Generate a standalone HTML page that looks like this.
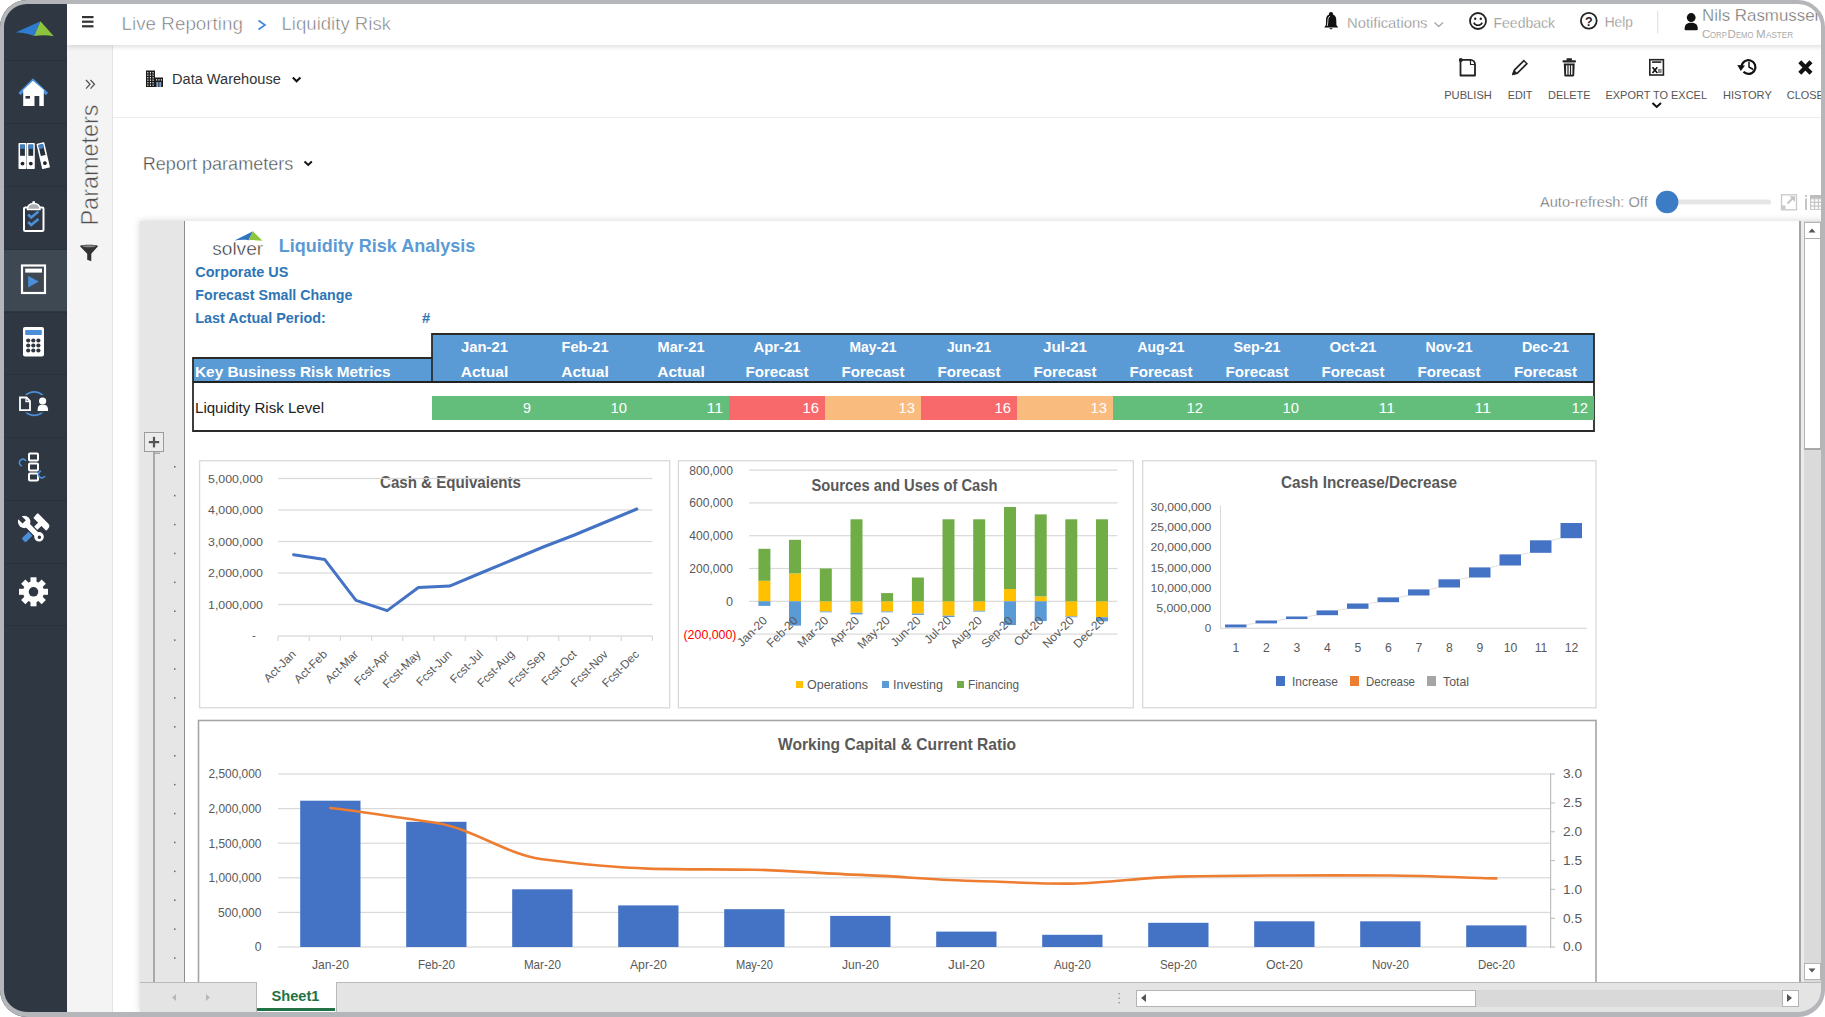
<!DOCTYPE html>
<html><head><meta charset="utf-8"><title>Liquidity Risk</title>
<style>
html,body{margin:0;padding:0;width:1825px;height:1017px;overflow:hidden;background:#fff;}
body{font-family:"Liberation Sans",sans-serif;position:relative;}
.abs{position:absolute;}
svg{position:absolute;left:0;top:0;overflow:visible;}
svg text{font-family:"Liberation Sans",sans-serif;}
</style></head><body>

<div class="abs" style="left:113px;top:45px;width:1712px;height:972px;background:#fff"></div>
<div class="abs" style="left:113px;top:117px;width:1712px;height:1px;background:#ececec"></div>
<div class="abs" style="left:67px;top:45px;width:45px;height:972px;background:#f4f4f4;border-right:1px solid #e4e4e4"></div>
<div class="abs" style="left:67px;top:0;width:1758px;height:45px;background:#fff;box-shadow:0 2px 5px rgba(0,0,0,0.13);z-index:2"></div>
<div class="abs" style="left:140px;top:221px;width:1685px;height:791px;background:#fff;box-shadow:0 0 7px rgba(0,0,0,0.18)"></div>
<div class="abs" style="left:0;top:0;width:67px;height:1017px;background:#2f3742;z-index:3"></div>
<div class="abs" style="left:0;top:249px;width:67px;height:62px;background:#3e4853;z-index:3"></div>
<div class="abs" style="left:0;top:60px;width:67px;height:1px;background:#29313b;z-index:3"></div>
<div class="abs" style="left:0;top:123px;width:67px;height:1px;background:#29313b;z-index:3"></div>
<div class="abs" style="left:0;top:186px;width:67px;height:1px;background:#29313b;z-index:3"></div>
<div class="abs" style="left:0;top:249px;width:67px;height:1px;background:#29313b;z-index:3"></div>
<div class="abs" style="left:0;top:312px;width:67px;height:1px;background:#29313b;z-index:3"></div>
<div class="abs" style="left:0;top:374px;width:67px;height:1px;background:#29313b;z-index:3"></div>
<div class="abs" style="left:0;top:437px;width:67px;height:1px;background:#29313b;z-index:3"></div>
<div class="abs" style="left:0;top:500px;width:67px;height:1px;background:#29313b;z-index:3"></div>
<div class="abs" style="left:0;top:563px;width:67px;height:1px;background:#29313b;z-index:3"></div>
<div class="abs" style="left:0;top:625px;width:67px;height:1px;background:#29313b;z-index:3"></div>
<div class="abs" style="left:140px;top:221px;width:44px;height:761px;background:#e6e6e6"></div>
<div class="abs" style="left:183.5px;top:221px;width:1.5px;height:761px;background:#8e8e8e"></div>
<div class="abs" style="left:153px;top:452px;width:2px;height:530px;background:#a8a8a8"></div>
<div class="abs" style="left:144px;top:432px;width:18px;height:18px;border:1px solid #9c9c9c;background:#ececec"></div>
<div class="abs" style="left:1799px;top:221px;width:2px;height:761px;background:#a4a4a4"></div>
<div class="abs" style="left:1801px;top:221px;width:24px;height:761px;background:#dadada"></div>
<div class="abs" style="left:1801px;top:221px;width:3px;height:761px;background:#ebebeb"></div>
<div class="abs" style="left:1804px;top:222px;width:15px;height:15px;background:#fff;border:1px solid #b4b4b4;border-bottom:2px solid #b0b0b0"></div>
<div class="abs" style="left:1804px;top:239px;width:15px;height:209px;background:#fff;border:1px solid #b4b4b4;border-top:none;border-bottom:2px solid #a8a8a8"></div>
<div class="abs" style="left:1804px;top:963px;width:15px;height:15px;background:#fff;border:1px solid #b4b4b4"></div>
<div class="abs" style="left:140px;top:982px;width:1685px;height:35px;background:#e4e4e4;border-top:1px solid #b9b9b9"></div>
<div class="abs" style="left:256px;top:982px;width:79px;height:30px;background:#fff;border-left:1px solid #b9b9b9;border-right:1px solid #b9b9b9"></div>
<div class="abs" style="left:257px;top:1008px;width:78px;height:3px;background:#217346"></div>
<div class="abs" style="left:1136px;top:990px;width:663px;height:17px;background:#d9d9d9"></div>
<div class="abs" style="left:1136px;top:990px;width:15px;height:15px;background:#fff;border:1px solid #b4b4b4"></div>
<div class="abs" style="left:1152px;top:990px;width:323px;height:15px;background:#fff;border:1px solid #b4b4b4;border-left:none"></div>
<div class="abs" style="left:1782px;top:990px;width:15px;height:15px;background:#fff;border:1px solid #b4b4b4"></div>
<svg width="1825" height="1017" viewBox="0 0 1825 1017" style="z-index:10"><path d="M15.5,32.5 L40.5,21.2 L34.2,36 C28,33.5 22,32.3 15.5,32.5 Z" fill="#2f7bd0"/>
<path d="M40.5,21.2 L53.8,36.3 C47,35 40.5,35.2 34.2,36 Z" fill="#8cc43f"/>
<path d="M19.5,94 L33,80.5 L47,94" fill="none" stroke="#4a8fd8" stroke-width="3.2" stroke-linejoin="miter"/>
<path d="M23.2,90 L33,80.8 L43.8,90 L43.8,106 L23.2,106 Z" fill="#fff"/>
<rect x="25.5" y="96" width="4.5" height="2.6" fill="#2f3742"/><rect x="34.5" y="96" width="4.8" height="10" fill="#2f3742"/>
<rect x="18.5" y="143" width="8" height="26" rx="0.8" fill="#fff"/><rect x="20.1" y="144.6" width="4.8" height="11.2" fill="#26303a"/><rect x="20.1" y="144.6" width="4.8" height="4.2" fill="#3f7fc8"/><circle cx="22.5" cy="163.6" r="1.9" fill="#1e252d"/><rect x="26.8" y="143" width="8" height="26" rx="0.8" fill="#fff"/><rect x="28.400000000000002" y="144.6" width="4.8" height="11.2" fill="#26303a"/><rect x="28.400000000000002" y="144.6" width="4.8" height="4.2" fill="#3f7fc8"/><circle cx="30.8" cy="163.6" r="1.9" fill="#1e252d"/><g transform="rotate(-13 40.3 143)"><rect x="36.3" y="143" width="8" height="26" rx="0.8" fill="#fff"/><rect x="37.9" y="144.6" width="4.8" height="11.2" fill="#26303a"/><rect x="37.9" y="144.6" width="4.8" height="4.2" fill="#3f7fc8"/><circle cx="40.3" cy="163.6" r="1.9" fill="#1e252d"/></g>
<rect x="24" y="207.5" width="19.5" height="23.5" rx="1.2" fill="none" stroke="#fff" stroke-width="2"/><path d="M27.5,209.5 C27.5,205.5 29,203.5 33.7,203.5 C38.5,203.5 40,205.5 40,209.5 Z" fill="#a9aeb3" stroke="#fff" stroke-width="1.4"/><circle cx="33.7" cy="202.2" r="1.3" fill="#fff"/><path d="M28.2,214.5 L31.2,217.5 L38.5,211.5 M28.2,222 L31.2,225 L38.5,219" fill="none" stroke="#4a8fd8" stroke-width="2.6"/>
<rect x="22" y="265.5" width="23" height="27.5" fill="none" stroke="#fff" stroke-width="2.2"/><rect x="25.2" y="268.6" width="16.8" height="4" fill="#fff"/><path d="M28.2,276 L38.8,281.6 L28.2,287.5 Z" fill="#4a8fd8"/>
<rect x="23" y="327" width="21" height="29.5" rx="2" fill="#fff"/><rect x="25.2" y="330" width="16.6" height="5" rx="0.8" fill="#4a8fd8"/>
<circle cx="28.2" cy="340.5" r="2.1" fill="#2f3742"/>
<circle cx="33.3" cy="340.5" r="2.1" fill="#2f3742"/>
<circle cx="38.4" cy="340.5" r="2.1" fill="#2f3742"/>
<circle cx="28.2" cy="345.5" r="2.1" fill="#2f3742"/>
<circle cx="33.3" cy="345.5" r="2.1" fill="#2f3742"/>
<circle cx="38.4" cy="345.5" r="2.1" fill="#2f3742"/>
<circle cx="28.2" cy="350.5" r="2.1" fill="#2f3742"/>
<circle cx="33.3" cy="350.5" r="2.1" fill="#2f3742"/>
<circle cx="38.4" cy="350.5" r="2.1" fill="#2f3742"/>
<circle cx="34.2" cy="403.6" r="11.8" fill="none" stroke="#4a8fd8" stroke-width="1.8"/>
<rect x="17.5" y="395" width="15" height="17.5" fill="#2f3742"/><rect x="35.5" y="395" width="14.5" height="17.5" fill="#2f3742"/>
<path d="M20,397.5 L26.5,397.5 L30,401 L30,410.2 L20,410.2 Z" fill="none" stroke="#fff" stroke-width="1.8"/><path d="M26,397.5 L26,401.5 L30,401.5" fill="none" stroke="#fff" stroke-width="1.3"/><circle cx="42.6" cy="401" r="3.6" fill="#fff"/><path d="M37.6,411 C37.6,405.5 39.5,404.8 42.8,404.8 C46.1,404.8 48.1,405.5 48.1,411 Z" fill="#fff"/>
<rect x="29" y="453.5" width="9" height="7" rx="1" fill="none" stroke="#fff" stroke-width="2"/>
<rect x="29" y="463.5" width="9" height="7" rx="1" fill="none" stroke="#fff" stroke-width="2"/>
<rect x="29" y="473.5" width="9" height="7" rx="1" fill="none" stroke="#fff" stroke-width="2"/>
<path d="M26,461 A3.5,3.5 0 1 0 22,466" fill="none" stroke="#4a8fd8" stroke-width="1.6"/><path d="M41,471 A3.5,3.5 0 1 0 45,476" fill="none" stroke="#4a8fd8" stroke-width="1.6"/>
<g transform="translate(33.8 530.3) rotate(45)"><rect x="-2.3" y="-9" width="4.6" height="14" fill="#fff"/><rect x="-2.8" y="4" width="5.6" height="10.5" rx="1.5" fill="#4a8fd8"/><path d="M-9,-15 L6,-15 C8,-15 9,-13 9,-11 L9,-8.5 L-9,-8.5 C-9,-11 -10,-13 -9,-15 Z" fill="#fff"/></g>
<g transform="translate(31.6 529.4) rotate(-45)"><rect x="-3.2" y="-9" width="6.4" height="18" fill="#fff" stroke="#2f3742" stroke-width="1.2"/><circle cx="0" cy="-10.5" r="6.2" fill="#fff"/><rect x="-2.3" y="-18" width="4.6" height="7.5" fill="#2f3742"/><circle cx="0" cy="10.5" r="4.8" fill="#fff"/><circle cx="0" cy="11" r="1.7" fill="#2f3742"/></g>
<rect x="30.5" y="577.3" width="6" height="6" fill="#fff" transform="rotate(0 33.5 591.8)"/><rect x="30.5" y="577.3" width="6" height="6" fill="#fff" transform="rotate(45 33.5 591.8)"/><rect x="30.5" y="577.3" width="6" height="6" fill="#fff" transform="rotate(90 33.5 591.8)"/><rect x="30.5" y="577.3" width="6" height="6" fill="#fff" transform="rotate(135 33.5 591.8)"/><rect x="30.5" y="577.3" width="6" height="6" fill="#fff" transform="rotate(180 33.5 591.8)"/><rect x="30.5" y="577.3" width="6" height="6" fill="#fff" transform="rotate(225 33.5 591.8)"/><rect x="30.5" y="577.3" width="6" height="6" fill="#fff" transform="rotate(270 33.5 591.8)"/><rect x="30.5" y="577.3" width="6" height="6" fill="#fff" transform="rotate(315 33.5 591.8)"/><circle cx="33.5" cy="591.8" r="10.5" fill="#fff"/><circle cx="33.5" cy="591.8" r="4.8" fill="#2f3742"/>
<rect x="82" y="16" width="11.5" height="2.2" fill="#333"/><rect x="82" y="20.6" width="11.5" height="2.2" fill="#333"/><rect x="82" y="25.2" width="11.5" height="2.2" fill="#333"/>
<text x="121.5" y="29.7" font-size="18.70" fill="#6f6f6f" font-weight="normal" text-anchor="start" textLength="121.5" lengthAdjust="spacingAndGlyphs" stroke="#fff" stroke-width="0.55">Live Reporting</text>
<path d="M258.5,20.5 L265,25 L258.5,29.5" fill="none" stroke="#3d86d6" stroke-width="1.6"/>
<text x="281.5" y="29.7" font-size="18.70" fill="#6f6f6f" font-weight="normal" text-anchor="start" textLength="109.5" lengthAdjust="spacingAndGlyphs" stroke="#fff" stroke-width="0.55">Liquidity Risk</text>
<path d="M1331,12 C1332.6,12 1333.2,13 1333,14.5 C1335.8,15.5 1336.3,18 1336.3,21 L1336.4,25 L1338.2,27.5 L1324.2,27.5 L1325.9,25 L1326,21 C1326,18 1326.4,15.5 1329,14.5 C1328.8,13 1329.4,12 1331,12 Z" fill="#111"/><path d="M1329.5,28 L1332.5,28 C1332.5,29.8 1329.5,29.8 1329.5,28 Z" fill="#333"/><path d="M1330,16 C1328.2,17 1327.8,19.5 1327.8,22 L1327.3,26" fill="none" stroke="#ddd" stroke-width="0.9"/>
<text x="1347.0" y="27.8" font-size="14.50" fill="#808080" font-weight="normal" text-anchor="start" textLength="80.5" lengthAdjust="spacingAndGlyphs" stroke="#fff" stroke-width="0.35">Notifications</text>
<path d="M1434.5,22.5 L1438.7,26.5 L1443,22.5" fill="none" stroke="#aaa" stroke-width="1.5"/>
<circle cx="1478" cy="21" r="8" fill="none" stroke="#222" stroke-width="1.8"/><circle cx="1475.2" cy="18.8" r="1.2" fill="#222"/><circle cx="1480.8" cy="18.8" r="1.2" fill="#222"/><path d="M1473.8,22.6 C1475.5,26.2 1480.5,26.2 1482.2,22.6" fill="none" stroke="#222" stroke-width="1.6"/>
<text x="1493.5" y="27.8" font-size="14.50" fill="#808080" font-weight="normal" text-anchor="start" textLength="61.5" lengthAdjust="spacingAndGlyphs" stroke="#fff" stroke-width="0.35">Feedback</text>
<circle cx="1588.8" cy="20.8" r="7.9" fill="none" stroke="#222" stroke-width="1.8"/>
<text x="1588.8" y="25.6" font-size="12.50" fill="#222" font-weight="bold" text-anchor="middle" >?</text>
<text x="1604.7" y="27.2" font-size="14.50" fill="#808080" font-weight="normal" text-anchor="start" textLength="28.2" lengthAdjust="spacingAndGlyphs" stroke="#fff" stroke-width="0.35">Help</text>
<rect x="1657.2" y="11" width="1" height="22.5" fill="#dcdcdc"/>
<ellipse cx="1691.2" cy="17.6" rx="4.4" ry="4.5" fill="#111"/><path d="M1684.6,29.2 C1684.6,24 1687.5,22.8 1691.2,22.8 C1694.9,22.8 1697.8,24 1697.8,29.2 C1697.8,30 1697,30.2 1696,30.2 L1686.4,30.2 C1685.4,30.2 1684.6,30 1684.6,29.2 Z" fill="#111"/>
<text x="1702.0" y="20.9" font-size="15.60" fill="#606060" font-weight="normal" text-anchor="start" textLength="122.0" lengthAdjust="spacingAndGlyphs" stroke="#fff" stroke-width="0.4">Nils Rasmussen</text>
<text x="1702.0" y="37.6" font-size="11.50" fill="#aaaaaa" font-weight="normal" text-anchor="start" >C</text>
<text x="1710" y="37.6" font-size="8.6" fill="#aaaaaa" textLength="17" lengthAdjust="spacingAndGlyphs">ORP</text>
<text x="1727.5" y="37.6" font-size="11.50" fill="#aaaaaa" font-weight="normal" text-anchor="start" >D</text>
<text x="1736" y="37.6" font-size="8.6" fill="#aaaaaa" textLength="17.5" lengthAdjust="spacingAndGlyphs">EMO</text>
<text x="1756.0" y="37.6" font-size="11.50" fill="#aaaaaa" font-weight="normal" text-anchor="start" >M</text>
<text x="1766" y="37.6" font-size="8.6" fill="#aaaaaa" textLength="27" lengthAdjust="spacingAndGlyphs">ASTER</text>
<path d="M86,80 L90,84.3 L86,88.6 M90.5,80 L94.5,84.3 L90.5,88.6" fill="none" stroke="#555" stroke-width="1.3"/>
<text x="0" y="0" font-size="23.6" fill="#505050" stroke="#f4f4f4" stroke-width="0.5" transform="translate(98,225.5) rotate(-90)" textLength="121" lengthAdjust="spacingAndGlyphs">Parameters</text>
<path d="M80,246.2 C80,244.2 98,244.2 98,246.2 L91.3,253.8 L91.3,261.2 L87.2,259.8 L87.2,253.8 Z" fill="#333"/><ellipse cx="89" cy="246.3" rx="6.5" ry="1" fill="#888"/>
<rect x="146" y="70.5" width="9" height="16.5" fill="#1a1a1a"/><rect x="154.5" y="77.5" width="8.5" height="9.5" fill="#1a1a1a"/>
<rect x="147.3" y="72.0" width="1.1" height="1.4" fill="#eee"/>
<rect x="149.9" y="72.0" width="1.1" height="1.4" fill="#eee"/>
<rect x="152.5" y="72.0" width="1.1" height="1.4" fill="#eee"/>
<rect x="147.3" y="74.5" width="1.1" height="1.4" fill="#eee"/>
<rect x="149.9" y="74.5" width="1.1" height="1.4" fill="#eee"/>
<rect x="152.5" y="74.5" width="1.1" height="1.4" fill="#eee"/>
<rect x="147.3" y="77.0" width="1.1" height="1.4" fill="#eee"/>
<rect x="149.9" y="77.0" width="1.1" height="1.4" fill="#eee"/>
<rect x="152.5" y="77.0" width="1.1" height="1.4" fill="#eee"/>
<rect x="147.3" y="79.5" width="1.1" height="1.4" fill="#eee"/>
<rect x="149.9" y="79.5" width="1.1" height="1.4" fill="#eee"/>
<rect x="152.5" y="79.5" width="1.1" height="1.4" fill="#eee"/>
<rect x="147.3" y="82.0" width="1.1" height="1.4" fill="#eee"/>
<rect x="149.9" y="82.0" width="1.1" height="1.4" fill="#eee"/>
<rect x="152.5" y="82.0" width="1.1" height="1.4" fill="#eee"/>
<rect x="147.3" y="84.5" width="1.1" height="1.4" fill="#eee"/>
<rect x="149.9" y="84.5" width="1.1" height="1.4" fill="#eee"/>
<rect x="152.5" y="84.5" width="1.1" height="1.4" fill="#eee"/>
<rect x="156" y="79.2" width="1.2" height="1.3" fill="#eee"/><rect x="158.4" y="79.2" width="1.2" height="1.3" fill="#eee"/><rect x="160.8" y="79.2" width="1.2" height="1.3" fill="#eee"/>
<rect x="156.3" y="82" width="5" height="5" fill="#7f9cc4"/><rect x="158.5" y="82" width="0.8" height="5" fill="#1a1a1a"/>
<text x="172.0" y="83.8" font-size="14.70" fill="#333" font-weight="normal" text-anchor="start" textLength="108.8" lengthAdjust="spacingAndGlyphs" >Data Warehouse</text>
<path d="M292.8,77.5 L296.6,81.3 L300.4,77.5" fill="none" stroke="#111" stroke-width="2"/>
<path d="M1460.5,59.8 L1470.5,59.8 C1473,59.8 1475,62 1475,64.5 L1475,75.5 L1460.5,75.5 Z" fill="none" stroke="#222" stroke-width="1.8" stroke-linejoin="round"/><path d="M1470.5,59.8 L1470.5,64.5 L1475,64.5" fill="none" stroke="#222" stroke-width="1.2"/><circle cx="1460.8" cy="60" r="2" fill="#222"/>
<path d="M1512,75.2 L1513.5,69.8 L1523.8,59.5 L1528,63.7 L1517.7,74 Z" fill="#222"/><path d="M1515,70.8 L1524,61.8 L1525.8,63.6 L1516.8,72.6 Z" fill="#fff"/><path d="M1512,75.2 L1513,71.7 L1515.5,74.2 Z" fill="#222"/>
<rect x="1562.5" y="60.2" width="13.5" height="2.4" rx="1" fill="#222"/><rect x="1566.5" y="58.3" width="5.5" height="2.5" rx="0.8" fill="#222"/><path d="M1563.8,63.6 L1574.7,63.6 L1574.2,75.2 C1574.2,76 1573.6,76.4 1573,76.4 L1565.5,76.4 C1564.9,76.4 1564.3,76 1564.3,75.2 Z" fill="#222"/><rect x="1566.1" y="65.3" width="1.3" height="9.4" fill="#fff"/><rect x="1568.6" y="65.3" width="1.3" height="9.4" fill="#fff"/><rect x="1571.1" y="65.3" width="1.3" height="9.4" fill="#fff"/>
<rect x="1649.8" y="59.7" width="13.6" height="15.3" fill="none" stroke="#222" stroke-width="1.6"/><rect x="1652" y="61.3" width="9.3" height="1.6" fill="#222"/>
<path d="M1652.5,67.3 L1657.3,73 M1657.3,67.3 L1652.5,73" stroke="#111" stroke-width="1.7"/><rect x="1658" y="69" width="3.6" height="4" fill="#888"/>
<path d="M1741.6,66.8 A6.9,6.9 0 1 1 1743.5,71.8" fill="none" stroke="#111" stroke-width="2.2"/><path d="M1737.3,65 L1745,65.5 L1740.8,71 Z" fill="#111"/><path d="M1749,61.8 L1749,67 L1753.2,69.5" fill="none" stroke="#111" stroke-width="1.5"/>
<path d="M1799.8,61.8 L1811,73.2 M1811,61.8 L1799.8,73.2" stroke="#111" stroke-width="4.2"/>
<path d="M1652.5,103 L1656.7,107 L1661,103" fill="none" stroke="#111" stroke-width="2"/>
<text x="1444.2" y="99.1" font-size="11.60" fill="#555" font-weight="normal" text-anchor="start" textLength="47.7" lengthAdjust="spacingAndGlyphs" >PUBLISH</text>
<text x="1507.7" y="99.1" font-size="11.60" fill="#555" font-weight="normal" text-anchor="start" textLength="24.8" lengthAdjust="spacingAndGlyphs" >EDIT</text>
<text x="1548.0" y="99.1" font-size="11.60" fill="#555" font-weight="normal" text-anchor="start" textLength="42.6" lengthAdjust="spacingAndGlyphs" >DELETE</text>
<text x="1605.5" y="99.1" font-size="11.60" fill="#555" font-weight="normal" text-anchor="start" textLength="101.5" lengthAdjust="spacingAndGlyphs" >EXPORT TO EXCEL</text>
<text x="1722.9" y="99.1" font-size="11.60" fill="#555" font-weight="normal" text-anchor="start" textLength="48.9" lengthAdjust="spacingAndGlyphs" >HISTORY</text>
<text x="1786.8" y="99.1" font-size="11.60" fill="#555" font-weight="normal" text-anchor="start" textLength="37.0" lengthAdjust="spacingAndGlyphs" >CLOSE</text>
<text x="142.8" y="169.5" font-size="18.60" fill="#4a4a4a" font-weight="normal" text-anchor="start" textLength="150.5" lengthAdjust="spacingAndGlyphs" stroke="#fff" stroke-width="0.4">Report parameters</text>
<path d="M304.5,161.5 L308.2,165 L311.8,161.5" fill="none" stroke="#111" stroke-width="1.9"/>
<text x="1540.0" y="206.8" font-size="14.60" fill="#606060" font-weight="normal" text-anchor="start" textLength="107.7" lengthAdjust="spacingAndGlyphs" stroke="#fff" stroke-width="0.35">Auto-refresh: Off</text>
<rect x="1667" y="199.5" width="104" height="5" rx="2.5" fill="#e6e6e6"/><circle cx="1667.1" cy="202" r="11.3" fill="#3b7cc4"/>
<rect x="1781.5" y="194.8" width="15" height="15" fill="none" stroke="#c8c8c8" stroke-width="1.3"/><path d="M1787.5,203.5 L1793,198" stroke="#c4c4c4" stroke-width="2"/><path d="M1795,196.3 L1795,202 L1789.5,196.3 Z" fill="#c4c4c4"/><rect x="1782" y="205.5" width="3.5" height="3.5" fill="#c8c8c8"/>
<rect x="1805" y="195" width="2" height="2" fill="#c4c4c4"/><rect x="1805" y="198.5" width="2" height="11.5" fill="#c4c4c4"/><rect x="1810" y="195" width="12" height="15" fill="#c8c8c8"/><rect x="1810" y="195" width="12" height="3" fill="#bdbdbd"/>
<rect x="1811.3" y="199.3" width="2.5" height="2.4" fill="#fff"/>
<rect x="1815.2" y="199.3" width="2.5" height="2.4" fill="#fff"/>
<rect x="1819.1" y="199.3" width="2.5" height="2.4" fill="#fff"/>
<rect x="1811.3" y="203.0" width="2.5" height="2.4" fill="#fff"/>
<rect x="1815.2" y="203.0" width="2.5" height="2.4" fill="#fff"/>
<rect x="1819.1" y="203.0" width="2.5" height="2.4" fill="#fff"/>
<rect x="1811.3" y="206.7" width="2.5" height="2.4" fill="#fff"/>
<rect x="1815.2" y="206.7" width="2.5" height="2.4" fill="#fff"/>
<rect x="1819.1" y="206.7" width="2.5" height="2.4" fill="#fff"/>
<rect x="148.8" y="441" width="10.4" height="2.2" fill="#555"/><rect x="152.9" y="436.8" width="2.2" height="10.6" fill="#555"/><rect x="154" y="452.5" width="6" height="1.5" fill="#a8a8a8"/>
<rect x="174" y="466.0" width="1.5" height="1.5" fill="#666"/>
<rect x="174" y="494.9" width="1.5" height="1.5" fill="#666"/>
<rect x="174" y="523.8" width="1.5" height="1.5" fill="#666"/>
<rect x="174" y="552.7" width="1.5" height="1.5" fill="#666"/>
<rect x="174" y="581.6" width="1.5" height="1.5" fill="#666"/>
<rect x="174" y="610.5" width="1.5" height="1.5" fill="#666"/>
<rect x="174" y="639.4" width="1.5" height="1.5" fill="#666"/>
<rect x="174" y="668.3" width="1.5" height="1.5" fill="#666"/>
<rect x="174" y="697.2" width="1.5" height="1.5" fill="#666"/>
<rect x="174" y="726.1" width="1.5" height="1.5" fill="#666"/>
<rect x="174" y="755.0" width="1.5" height="1.5" fill="#666"/>
<rect x="174" y="783.9" width="1.5" height="1.5" fill="#666"/>
<rect x="174" y="812.8" width="1.5" height="1.5" fill="#666"/>
<rect x="174" y="841.7" width="1.5" height="1.5" fill="#666"/>
<rect x="174" y="870.6" width="1.5" height="1.5" fill="#666"/>
<rect x="174" y="899.5" width="1.5" height="1.5" fill="#666"/>
<rect x="174" y="928.4" width="1.5" height="1.5" fill="#666"/>
<rect x="174" y="957.3" width="1.5" height="1.5" fill="#666"/>
<path d="M176,994 L172,997.5 L176,1001 Z" fill="#b8b8b8"/><path d="M206,994 L210,997.5 L206,1001 Z" fill="#b8b8b8"/>
<text x="295.5" y="1001.0" font-size="14.00" fill="#217346" font-weight="bold" text-anchor="middle" textLength="48.0" lengthAdjust="spacingAndGlyphs" >Sheet1</text>
<rect x="1118.5" y="993" width="1.3" height="1.3" fill="#888"/><rect x="1118.5" y="997.5" width="1.3" height="1.3" fill="#888"/><rect x="1118.5" y="1002" width="1.3" height="1.3" fill="#888"/>
<path d="M1146,994 L1141,998 L1146,1002 Z" fill="#555"/><path d="M1787,994 L1792,998 L1787,1002 Z" fill="#555"/>
<path d="M1808.5,232.5 L1812,228.5 L1815.5,232.5 Z" fill="#555"/><path d="M1808.5,968.5 L1812,972.5 L1815.5,968.5 Z" fill="#555"/>
<defs><clipPath id="shc"><rect x="185" y="221" width="1614" height="761"/></clipPath></defs><g clip-path="url(#shc)">
<path d="M234.5,240.5 L253,231.2 L248.5,240.2 C244,239.6 239,239.8 234.5,240.5 Z" fill="#2e74c0"/>
<path d="M253,231.2 L262.5,240.7 C258,240.2 253,240 248.5,240.2 Z" fill="#8dc63f"/>
<text x="212.2" y="255.0" font-size="18.50" fill="#2b2b2b" font-weight="normal" text-anchor="start" textLength="51.0" lengthAdjust="spacingAndGlyphs" stroke="#fff" stroke-width="0.45">solver</text>
<text x="278.8" y="252.1" font-size="18.20" fill="#5b9bd5" font-weight="bold" text-anchor="start" textLength="196.5" lengthAdjust="spacingAndGlyphs" >Liquidity Risk Analysis</text>
<text x="195.3" y="277.3" font-size="14.30" fill="#2e75b6" font-weight="bold" text-anchor="start" textLength="93.0" lengthAdjust="spacingAndGlyphs" >Corporate US</text>
<text x="195.3" y="300.3" font-size="14.30" fill="#2e75b6" font-weight="bold" text-anchor="start" textLength="157.0" lengthAdjust="spacingAndGlyphs" >Forecast Small Change</text>
<text x="195.3" y="323.3" font-size="14.30" fill="#2e75b6" font-weight="bold" text-anchor="start" textLength="130.5" lengthAdjust="spacingAndGlyphs" >Last Actual Period:</text>
<text x="421.9" y="323.3" font-size="14.30" fill="#2e75b6" font-weight="bold" text-anchor="start" textLength="8.2" lengthAdjust="spacingAndGlyphs" >#</text>
<rect x="193" y="358" width="239" height="24" fill="#5b9bd5"/>
<rect x="432" y="334" width="1162" height="48" fill="#5b9bd5"/>
<path d="M193,431 L193,358 L432,358 L432,334 L1594,334 L1594,431 Z" fill="none" stroke="#2a2a2a" stroke-width="1.8"/>
<path d="M193,382 L1594,382" stroke="#222" stroke-width="2"/>
<path d="M432,358 L432,382" stroke="#222" stroke-width="1.6"/>
<text x="195.0" y="376.6" font-size="15.20" fill="#fff" font-weight="bold" text-anchor="start" textLength="195.5" lengthAdjust="spacingAndGlyphs" >Key Business Risk Metrics</text>
<text x="195.0" y="413.0" font-size="14.50" fill="#222" font-weight="normal" text-anchor="start" textLength="129.0" lengthAdjust="spacingAndGlyphs" >Liquidity Risk Level</text>
<text x="484.5" y="351.7" font-size="15.00" fill="#fff" font-weight="bold" text-anchor="middle" textLength="47.0" lengthAdjust="spacingAndGlyphs" >Jan-21</text>
<text x="484.5" y="377.0" font-size="15.00" fill="#fff" font-weight="bold" text-anchor="middle" textLength="47.5" lengthAdjust="spacingAndGlyphs" >Actual</text>
<rect x="432" y="396" width="105" height="24" fill="#63be7b"/>
<text x="531.0" y="413.0" font-size="14.50" fill="#fff" font-weight="normal" text-anchor="end" textLength="8.0" lengthAdjust="spacingAndGlyphs" >9</text>
<text x="585.0" y="351.7" font-size="15.00" fill="#fff" font-weight="bold" text-anchor="middle" textLength="47.0" lengthAdjust="spacingAndGlyphs" >Feb-21</text>
<text x="585.0" y="377.0" font-size="15.00" fill="#fff" font-weight="bold" text-anchor="middle" textLength="47.5" lengthAdjust="spacingAndGlyphs" >Actual</text>
<rect x="537" y="396" width="96" height="24" fill="#63be7b"/>
<text x="627.0" y="413.0" font-size="14.50" fill="#fff" font-weight="normal" text-anchor="end" textLength="16.5" lengthAdjust="spacingAndGlyphs" >10</text>
<text x="681.0" y="351.7" font-size="15.00" fill="#fff" font-weight="bold" text-anchor="middle" textLength="47.0" lengthAdjust="spacingAndGlyphs" >Mar-21</text>
<text x="681.0" y="377.0" font-size="15.00" fill="#fff" font-weight="bold" text-anchor="middle" textLength="47.5" lengthAdjust="spacingAndGlyphs" >Actual</text>
<rect x="633" y="396" width="96" height="24" fill="#63be7b"/>
<text x="723.0" y="413.0" font-size="14.50" fill="#fff" font-weight="normal" text-anchor="end" textLength="16.5" lengthAdjust="spacingAndGlyphs" >11</text>
<text x="777.0" y="351.7" font-size="15.00" fill="#fff" font-weight="bold" text-anchor="middle" textLength="47.0" lengthAdjust="spacingAndGlyphs" >Apr-21</text>
<text x="777.0" y="377.0" font-size="15.00" fill="#fff" font-weight="bold" text-anchor="middle" textLength="63.0" lengthAdjust="spacingAndGlyphs" >Forecast</text>
<rect x="729" y="396" width="96" height="24" fill="#f8696b"/>
<text x="819.0" y="413.0" font-size="14.50" fill="#fff" font-weight="normal" text-anchor="end" textLength="16.5" lengthAdjust="spacingAndGlyphs" >16</text>
<text x="873.0" y="351.7" font-size="15.00" fill="#fff" font-weight="bold" text-anchor="middle" textLength="47.0" lengthAdjust="spacingAndGlyphs" >May-21</text>
<text x="873.0" y="377.0" font-size="15.00" fill="#fff" font-weight="bold" text-anchor="middle" textLength="63.0" lengthAdjust="spacingAndGlyphs" >Forecast</text>
<rect x="825" y="396" width="96" height="24" fill="#f9bb7e"/>
<text x="915.0" y="413.0" font-size="14.50" fill="#fff" font-weight="normal" text-anchor="end" textLength="16.5" lengthAdjust="spacingAndGlyphs" >13</text>
<text x="969.0" y="351.7" font-size="15.00" fill="#fff" font-weight="bold" text-anchor="middle" textLength="44.0" lengthAdjust="spacingAndGlyphs" >Jun-21</text>
<text x="969.0" y="377.0" font-size="15.00" fill="#fff" font-weight="bold" text-anchor="middle" textLength="63.0" lengthAdjust="spacingAndGlyphs" >Forecast</text>
<rect x="921" y="396" width="96" height="24" fill="#f8696b"/>
<text x="1011.0" y="413.0" font-size="14.50" fill="#fff" font-weight="normal" text-anchor="end" textLength="16.5" lengthAdjust="spacingAndGlyphs" >16</text>
<text x="1065.0" y="351.7" font-size="15.00" fill="#fff" font-weight="bold" text-anchor="middle" textLength="44.0" lengthAdjust="spacingAndGlyphs" >Jul-21</text>
<text x="1065.0" y="377.0" font-size="15.00" fill="#fff" font-weight="bold" text-anchor="middle" textLength="63.0" lengthAdjust="spacingAndGlyphs" >Forecast</text>
<rect x="1017" y="396" width="96" height="24" fill="#f9bb7e"/>
<text x="1107.0" y="413.0" font-size="14.50" fill="#fff" font-weight="normal" text-anchor="end" textLength="16.5" lengthAdjust="spacingAndGlyphs" >13</text>
<text x="1161.0" y="351.7" font-size="15.00" fill="#fff" font-weight="bold" text-anchor="middle" textLength="47.0" lengthAdjust="spacingAndGlyphs" >Aug-21</text>
<text x="1161.0" y="377.0" font-size="15.00" fill="#fff" font-weight="bold" text-anchor="middle" textLength="63.0" lengthAdjust="spacingAndGlyphs" >Forecast</text>
<rect x="1113" y="396" width="96" height="24" fill="#63be7b"/>
<text x="1203.0" y="413.0" font-size="14.50" fill="#fff" font-weight="normal" text-anchor="end" textLength="16.5" lengthAdjust="spacingAndGlyphs" >12</text>
<text x="1257.0" y="351.7" font-size="15.00" fill="#fff" font-weight="bold" text-anchor="middle" textLength="47.0" lengthAdjust="spacingAndGlyphs" >Sep-21</text>
<text x="1257.0" y="377.0" font-size="15.00" fill="#fff" font-weight="bold" text-anchor="middle" textLength="63.0" lengthAdjust="spacingAndGlyphs" >Forecast</text>
<rect x="1209" y="396" width="96" height="24" fill="#63be7b"/>
<text x="1299.0" y="413.0" font-size="14.50" fill="#fff" font-weight="normal" text-anchor="end" textLength="16.5" lengthAdjust="spacingAndGlyphs" >10</text>
<text x="1353.0" y="351.7" font-size="15.00" fill="#fff" font-weight="bold" text-anchor="middle" textLength="47.0" lengthAdjust="spacingAndGlyphs" >Oct-21</text>
<text x="1353.0" y="377.0" font-size="15.00" fill="#fff" font-weight="bold" text-anchor="middle" textLength="63.0" lengthAdjust="spacingAndGlyphs" >Forecast</text>
<rect x="1305" y="396" width="96" height="24" fill="#63be7b"/>
<text x="1395.0" y="413.0" font-size="14.50" fill="#fff" font-weight="normal" text-anchor="end" textLength="16.5" lengthAdjust="spacingAndGlyphs" >11</text>
<text x="1449.0" y="351.7" font-size="15.00" fill="#fff" font-weight="bold" text-anchor="middle" textLength="47.0" lengthAdjust="spacingAndGlyphs" >Nov-21</text>
<text x="1449.0" y="377.0" font-size="15.00" fill="#fff" font-weight="bold" text-anchor="middle" textLength="63.0" lengthAdjust="spacingAndGlyphs" >Forecast</text>
<rect x="1401" y="396" width="96" height="24" fill="#63be7b"/>
<text x="1491.0" y="413.0" font-size="14.50" fill="#fff" font-weight="normal" text-anchor="end" textLength="16.5" lengthAdjust="spacingAndGlyphs" >11</text>
<text x="1545.5" y="351.7" font-size="15.00" fill="#fff" font-weight="bold" text-anchor="middle" textLength="47.0" lengthAdjust="spacingAndGlyphs" >Dec-21</text>
<text x="1545.5" y="377.0" font-size="15.00" fill="#fff" font-weight="bold" text-anchor="middle" textLength="63.0" lengthAdjust="spacingAndGlyphs" >Forecast</text>
<rect x="1497" y="396" width="97" height="24" fill="#63be7b"/>
<text x="1588.0" y="413.0" font-size="14.50" fill="#fff" font-weight="normal" text-anchor="end" textLength="16.5" lengthAdjust="spacingAndGlyphs" >12</text>
<rect x="199.6" y="460.8" width="470.1" height="246.99999999999994" fill="#fff" stroke="#d9d9d9" stroke-width="1.3"/>
<rect x="678.4" y="460.8" width="454.9" height="246.99999999999994" fill="#fff" stroke="#d9d9d9" stroke-width="1.3"/>
<rect x="1142.7" y="460.8" width="453.29999999999995" height="246.99999999999994" fill="#fff" stroke="#d9d9d9" stroke-width="1.3"/>
<rect x="198.5" y="720.5" width="1397.5" height="279.5" fill="#fff" stroke="#a6a6a6" stroke-width="1.6"/>
<text x="450.5" y="488.0" font-size="16.90" fill="#595959" font-weight="bold" text-anchor="middle" textLength="141.0" lengthAdjust="spacingAndGlyphs" >Cash &amp; Equivalents</text>
<rect x="278" y="603.9" width="374.5" height="1.2" fill="#d9d9d9"/>
<text x="263.0" y="608.7" font-size="11.70" fill="#595959" font-weight="normal" text-anchor="end" textLength="55.0" lengthAdjust="spacingAndGlyphs" >1,000,000</text>
<rect x="278" y="572.4" width="374.5" height="1.2" fill="#d9d9d9"/>
<text x="263.0" y="577.2" font-size="11.70" fill="#595959" font-weight="normal" text-anchor="end" textLength="55.0" lengthAdjust="spacingAndGlyphs" >2,000,000</text>
<rect x="278" y="540.9" width="374.5" height="1.2" fill="#d9d9d9"/>
<text x="263.0" y="545.7" font-size="11.70" fill="#595959" font-weight="normal" text-anchor="end" textLength="55.0" lengthAdjust="spacingAndGlyphs" >3,000,000</text>
<rect x="278" y="509.4" width="374.5" height="1.2" fill="#d9d9d9"/>
<text x="263.0" y="514.2" font-size="11.70" fill="#595959" font-weight="normal" text-anchor="end" textLength="55.0" lengthAdjust="spacingAndGlyphs" >4,000,000</text>
<rect x="278" y="477.9" width="374.5" height="1.2" fill="#d9d9d9"/>
<text x="263.0" y="482.7" font-size="11.70" fill="#595959" font-weight="normal" text-anchor="end" textLength="55.0" lengthAdjust="spacingAndGlyphs" >5,000,000</text>
<rect x="278" y="635.4" width="374.5" height="1.3" fill="#d9d9d9"/>
<text x="256.0" y="639.0" font-size="11.70" fill="#595959" font-weight="normal" text-anchor="end" >-</text>
<rect x="277.4" y="636" width="1.2" height="5" fill="#d9d9d9"/>
<rect x="308.6" y="636" width="1.2" height="5" fill="#d9d9d9"/>
<rect x="339.8" y="636" width="1.2" height="5" fill="#d9d9d9"/>
<rect x="371.0" y="636" width="1.2" height="5" fill="#d9d9d9"/>
<rect x="402.2" y="636" width="1.2" height="5" fill="#d9d9d9"/>
<rect x="433.4" y="636" width="1.2" height="5" fill="#d9d9d9"/>
<rect x="464.6" y="636" width="1.2" height="5" fill="#d9d9d9"/>
<rect x="495.8" y="636" width="1.2" height="5" fill="#d9d9d9"/>
<rect x="527.0" y="636" width="1.2" height="5" fill="#d9d9d9"/>
<rect x="558.2" y="636" width="1.2" height="5" fill="#d9d9d9"/>
<rect x="589.4" y="636" width="1.2" height="5" fill="#d9d9d9"/>
<rect x="620.6" y="636" width="1.2" height="5" fill="#d9d9d9"/>
<rect x="651.8" y="636" width="1.2" height="5" fill="#d9d9d9"/>
<text x="0" y="0" font-size="11.7" fill="#595959" text-anchor="end" transform="translate(296.6,655.0) rotate(-45)">Act-Jan</text>
<text x="0" y="0" font-size="11.7" fill="#595959" text-anchor="end" transform="translate(327.8,655.0) rotate(-45)">Act-Feb</text>
<text x="0" y="0" font-size="11.7" fill="#595959" text-anchor="end" transform="translate(359.0,655.0) rotate(-45)">Act-Mar</text>
<text x="0" y="0" font-size="11.7" fill="#595959" text-anchor="end" transform="translate(390.2,655.0) rotate(-45)">Fcst-Apr</text>
<text x="0" y="0" font-size="11.7" fill="#595959" text-anchor="end" transform="translate(421.4,655.0) rotate(-45)">Fcst-May</text>
<text x="0" y="0" font-size="11.7" fill="#595959" text-anchor="end" transform="translate(452.6,655.0) rotate(-45)">Fcst-Jun</text>
<text x="0" y="0" font-size="11.7" fill="#595959" text-anchor="end" transform="translate(483.8,655.0) rotate(-45)">Fcst-Jul</text>
<text x="0" y="0" font-size="11.7" fill="#595959" text-anchor="end" transform="translate(515.0,655.0) rotate(-45)">Fcst-Aug</text>
<text x="0" y="0" font-size="11.7" fill="#595959" text-anchor="end" transform="translate(546.2,655.0) rotate(-45)">Fcst-Sep</text>
<text x="0" y="0" font-size="11.7" fill="#595959" text-anchor="end" transform="translate(577.4,655.0) rotate(-45)">Fcst-Oct</text>
<text x="0" y="0" font-size="11.7" fill="#595959" text-anchor="end" transform="translate(608.6,655.0) rotate(-45)">Fcst-Nov</text>
<text x="0" y="0" font-size="11.7" fill="#595959" text-anchor="end" transform="translate(639.8,655.0) rotate(-45)">Fcst-Dec</text>
<polyline points="293.6,554.7 324.8,559.6 356.0,600.4 387.2,610.6 418.4,587.5 449.6,586.1 480.8,573.0 512.0,560.0 543.2,547.0 574.4,535.0 605.6,522.0 636.8,509.0" fill="none" stroke="#4472c4" stroke-width="3" stroke-linejoin="round" stroke-linecap="round"/>
<text x="904.5" y="491.0" font-size="16.90" fill="#595959" font-weight="bold" text-anchor="middle" textLength="186.0" lengthAdjust="spacingAndGlyphs" >Sources and Uses of Cash</text>
<rect x="749" y="469.5" width="368.5" height="1.2" fill="#d9d9d9"/>
<text x="733.0" y="474.6" font-size="12.60" fill="#595959" font-weight="normal" text-anchor="end" textLength="43.7" lengthAdjust="spacingAndGlyphs" >800,000</text>
<rect x="749" y="502.3" width="368.5" height="1.2" fill="#d9d9d9"/>
<text x="733.0" y="507.4" font-size="12.60" fill="#595959" font-weight="normal" text-anchor="end" textLength="43.7" lengthAdjust="spacingAndGlyphs" >600,000</text>
<rect x="749" y="535.1" width="368.5" height="1.2" fill="#d9d9d9"/>
<text x="733.0" y="540.2" font-size="12.60" fill="#595959" font-weight="normal" text-anchor="end" textLength="43.7" lengthAdjust="spacingAndGlyphs" >400,000</text>
<rect x="749" y="567.9" width="368.5" height="1.2" fill="#d9d9d9"/>
<text x="733.0" y="573.0" font-size="12.60" fill="#595959" font-weight="normal" text-anchor="end" textLength="43.7" lengthAdjust="spacingAndGlyphs" >200,000</text>
<rect x="749" y="600.7" width="368.5" height="1.2" fill="#d9d9d9"/>
<text x="733.0" y="605.8" font-size="12.60" fill="#595959" font-weight="normal" text-anchor="end" >0</text>
<rect x="749" y="633.5" width="368.5" height="1.2" fill="#d9d9d9"/>
<text x="736.5" y="638.6" font-size="12.60" fill="#ff0000" font-weight="normal" text-anchor="end" textLength="53.0" lengthAdjust="spacingAndGlyphs" >(200,000)</text>
<rect x="758.4" y="580.8" width="12" height="20.5" fill="#ffc000"/>
<rect x="758.4" y="601.3" width="12" height="4.6" fill="#5b9bd5"/>
<rect x="758.4" y="548.8" width="12" height="32.0" fill="#70ad47"/>
<rect x="789.0" y="573.4" width="12" height="27.9" fill="#ffc000"/>
<rect x="789.0" y="601.3" width="12" height="24.3" fill="#5b9bd5"/>
<rect x="789.0" y="539.8" width="12" height="33.6" fill="#70ad47"/>
<rect x="819.8" y="601.3" width="12" height="10.2" fill="#ffc000"/>
<rect x="819.8" y="611.5" width="12" height="0.8" fill="#5b9bd5"/>
<rect x="819.8" y="568.5" width="12" height="32.8" fill="#70ad47"/>
<rect x="850.5" y="601.3" width="12" height="11.5" fill="#ffc000"/>
<rect x="850.5" y="612.8" width="12" height="1.6" fill="#5b9bd5"/>
<rect x="850.5" y="519.3" width="12" height="82.0" fill="#70ad47"/>
<rect x="881.1" y="601.3" width="12" height="10.2" fill="#ffc000"/>
<rect x="881.1" y="611.5" width="12" height="0.8" fill="#5b9bd5"/>
<rect x="881.1" y="593.1" width="12" height="8.2" fill="#70ad47"/>
<rect x="911.9" y="601.3" width="12" height="12.3" fill="#ffc000"/>
<rect x="911.9" y="613.6" width="12" height="1.3" fill="#5b9bd5"/>
<rect x="911.9" y="577.5" width="12" height="23.8" fill="#70ad47"/>
<rect x="942.5" y="601.3" width="12" height="14.4" fill="#ffc000"/>
<rect x="942.5" y="615.7" width="12" height="1.3" fill="#5b9bd5"/>
<rect x="942.5" y="519.3" width="12" height="82.0" fill="#70ad47"/>
<rect x="973.2" y="601.3" width="12" height="9.5" fill="#ffc000"/>
<rect x="973.2" y="610.8" width="12" height="0.8" fill="#5b9bd5"/>
<rect x="973.2" y="519.3" width="12" height="82.0" fill="#70ad47"/>
<rect x="1004.0" y="589.0" width="12" height="12.3" fill="#ffc000"/>
<rect x="1004.0" y="601.3" width="12" height="23.8" fill="#5b9bd5"/>
<rect x="1004.0" y="507.0" width="12" height="82.0" fill="#70ad47"/>
<rect x="1034.7" y="596.4" width="12" height="4.9" fill="#ffc000"/>
<rect x="1034.7" y="601.3" width="12" height="19.7" fill="#5b9bd5"/>
<rect x="1034.7" y="514.4" width="12" height="82.0" fill="#70ad47"/>
<rect x="1065.3" y="601.3" width="12" height="15.1" fill="#ffc000"/>
<rect x="1065.3" y="616.4" width="12" height="0.8" fill="#5b9bd5"/>
<rect x="1065.3" y="519.3" width="12" height="82.0" fill="#70ad47"/>
<rect x="1096.0" y="601.3" width="12" height="15.9" fill="#ffc000"/>
<rect x="1096.0" y="617.2" width="12" height="4.1" fill="#5b9bd5"/>
<rect x="1096.0" y="519.3" width="12" height="82.0" fill="#70ad47"/>
<text x="0" y="0" font-size="12" fill="#595959" text-anchor="end" transform="translate(767.9,621.3) rotate(-45)">Jan-20</text>
<text x="0" y="0" font-size="12" fill="#595959" text-anchor="end" transform="translate(798.5,621.3) rotate(-45)">Feb-20</text>
<text x="0" y="0" font-size="12" fill="#595959" text-anchor="end" transform="translate(829.2,621.3) rotate(-45)">Mar-20</text>
<text x="0" y="0" font-size="12" fill="#595959" text-anchor="end" transform="translate(860.0,621.3) rotate(-45)">Apr-20</text>
<text x="0" y="0" font-size="12" fill="#595959" text-anchor="end" transform="translate(890.6,621.3) rotate(-45)">May-20</text>
<text x="0" y="0" font-size="12" fill="#595959" text-anchor="end" transform="translate(921.4,621.3) rotate(-45)">Jun-20</text>
<text x="0" y="0" font-size="12" fill="#595959" text-anchor="end" transform="translate(952.0,621.3) rotate(-45)">Jul-20</text>
<text x="0" y="0" font-size="12" fill="#595959" text-anchor="end" transform="translate(982.8,621.3) rotate(-45)">Aug-20</text>
<text x="0" y="0" font-size="12" fill="#595959" text-anchor="end" transform="translate(1013.5,621.3) rotate(-45)">Sep-20</text>
<text x="0" y="0" font-size="12" fill="#595959" text-anchor="end" transform="translate(1044.2,621.3) rotate(-45)">Oct-20</text>
<text x="0" y="0" font-size="12" fill="#595959" text-anchor="end" transform="translate(1074.8,621.3) rotate(-45)">Nov-20</text>
<text x="0" y="0" font-size="12" fill="#595959" text-anchor="end" transform="translate(1105.5,621.3) rotate(-45)">Dec-20</text>
<rect x="796" y="681" width="7" height="7" fill="#ffc000"/>
<text x="807.0" y="689.0" font-size="12.00" fill="#595959" font-weight="normal" text-anchor="start" textLength="61.0" lengthAdjust="spacingAndGlyphs" >Operations</text>
<rect x="882" y="681" width="7" height="7" fill="#5b9bd5"/>
<text x="893.0" y="689.0" font-size="12.00" fill="#595959" font-weight="normal" text-anchor="start" textLength="50.0" lengthAdjust="spacingAndGlyphs" >Investing</text>
<rect x="957" y="681" width="7" height="7" fill="#70ad47"/>
<text x="968.0" y="689.0" font-size="12.00" fill="#595959" font-weight="normal" text-anchor="start" textLength="51.0" lengthAdjust="spacingAndGlyphs" >Financing</text>
<text x="1369.0" y="488.0" font-size="16.90" fill="#595959" font-weight="bold" text-anchor="middle" textLength="176.0" lengthAdjust="spacingAndGlyphs" >Cash Increase/Decrease</text>
<rect x="1220" y="505.5" width="1" height="122.7" fill="#d9d9d9"/>
<rect x="1220" y="627.7" width="367" height="1.2" fill="#d9d9d9"/>
<text x="1211.2" y="632.4" font-size="11.70" fill="#595959" font-weight="normal" text-anchor="end" >0</text>
<text x="1211.2" y="612.1" font-size="11.70" fill="#595959" font-weight="normal" text-anchor="end" textLength="55.0" lengthAdjust="spacingAndGlyphs" >5,000,000</text>
<text x="1211.2" y="591.8" font-size="11.70" fill="#595959" font-weight="normal" text-anchor="end" textLength="60.7" lengthAdjust="spacingAndGlyphs" >10,000,000</text>
<text x="1211.2" y="571.5" font-size="11.70" fill="#595959" font-weight="normal" text-anchor="end" textLength="60.7" lengthAdjust="spacingAndGlyphs" >15,000,000</text>
<text x="1211.2" y="551.2" font-size="11.70" fill="#595959" font-weight="normal" text-anchor="end" textLength="60.7" lengthAdjust="spacingAndGlyphs" >20,000,000</text>
<text x="1211.2" y="530.9" font-size="11.70" fill="#595959" font-weight="normal" text-anchor="end" textLength="60.7" lengthAdjust="spacingAndGlyphs" >25,000,000</text>
<text x="1211.2" y="510.6" font-size="11.70" fill="#595959" font-weight="normal" text-anchor="end" textLength="60.7" lengthAdjust="spacingAndGlyphs" >30,000,000</text>
<rect x="1225.0" y="624.5" width="21.5" height="2.9" fill="#4472c4"/>
<line x1="1246.5" y1="624.5" x2="1255.5" y2="623.4" stroke="#e0e0e0" stroke-width="1"/>
<text x="1236.0" y="652.0" font-size="12.20" fill="#595959" font-weight="normal" text-anchor="middle" >1</text>
<rect x="1255.5" y="620.5" width="21.5" height="2.9" fill="#4472c4"/>
<line x1="1277.0" y1="620.5" x2="1286.0" y2="619.1" stroke="#e0e0e0" stroke-width="1"/>
<text x="1266.5" y="652.0" font-size="12.20" fill="#595959" font-weight="normal" text-anchor="middle" >2</text>
<rect x="1286.0" y="616.5" width="21.5" height="2.6" fill="#4472c4"/>
<line x1="1307.5" y1="616.5" x2="1316.5" y2="615.2" stroke="#e0e0e0" stroke-width="1"/>
<text x="1297.0" y="652.0" font-size="12.20" fill="#595959" font-weight="normal" text-anchor="middle" >3</text>
<rect x="1316.5" y="610.4" width="21.5" height="4.8" fill="#4472c4"/>
<line x1="1338.0" y1="610.4" x2="1347.0" y2="608.8" stroke="#e0e0e0" stroke-width="1"/>
<text x="1327.5" y="652.0" font-size="12.20" fill="#595959" font-weight="normal" text-anchor="middle" >4</text>
<rect x="1347.0" y="603.5" width="21.5" height="5.3" fill="#4472c4"/>
<line x1="1368.5" y1="603.5" x2="1377.5" y2="602.2" stroke="#e0e0e0" stroke-width="1"/>
<text x="1358.0" y="652.0" font-size="12.20" fill="#595959" font-weight="normal" text-anchor="middle" >5</text>
<rect x="1377.5" y="597.4" width="21.5" height="4.8" fill="#4472c4"/>
<line x1="1399.0" y1="597.4" x2="1408.0" y2="595.5" stroke="#e0e0e0" stroke-width="1"/>
<text x="1388.5" y="652.0" font-size="12.20" fill="#595959" font-weight="normal" text-anchor="middle" >6</text>
<rect x="1408.0" y="589.4" width="21.5" height="6.1" fill="#4472c4"/>
<line x1="1429.5" y1="589.4" x2="1438.5" y2="587.5" stroke="#e0e0e0" stroke-width="1"/>
<text x="1419.0" y="652.0" font-size="12.20" fill="#595959" font-weight="normal" text-anchor="middle" >7</text>
<rect x="1438.5" y="579.3" width="21.5" height="8.2" fill="#4472c4"/>
<line x1="1460.0" y1="579.3" x2="1469.0" y2="577.5" stroke="#e0e0e0" stroke-width="1"/>
<text x="1449.5" y="652.0" font-size="12.20" fill="#595959" font-weight="normal" text-anchor="middle" >8</text>
<rect x="1469.0" y="567.4" width="21.5" height="10.1" fill="#4472c4"/>
<line x1="1490.5" y1="567.4" x2="1499.5" y2="565.5" stroke="#e0e0e0" stroke-width="1"/>
<text x="1480.0" y="652.0" font-size="12.20" fill="#595959" font-weight="normal" text-anchor="middle" >9</text>
<rect x="1499.5" y="554.4" width="21.5" height="11.1" fill="#4472c4"/>
<line x1="1521.0" y1="554.4" x2="1530.0" y2="552.8" stroke="#e0e0e0" stroke-width="1"/>
<text x="1510.5" y="652.0" font-size="12.20" fill="#595959" font-weight="normal" text-anchor="middle" >10</text>
<rect x="1530.0" y="540.3" width="21.5" height="12.5" fill="#4472c4"/>
<line x1="1551.5" y1="540.3" x2="1560.5" y2="538.2" stroke="#e0e0e0" stroke-width="1"/>
<text x="1541.0" y="652.0" font-size="12.20" fill="#595959" font-weight="normal" text-anchor="middle" >11</text>
<rect x="1560.5" y="523.0" width="21.5" height="15.2" fill="#4472c4"/>
<text x="1571.5" y="652.0" font-size="12.20" fill="#595959" font-weight="normal" text-anchor="middle" >12</text>
<rect x="1276" y="676" width="9" height="10" fill="#4472c4"/>
<text x="1292.0" y="686.0" font-size="12.20" fill="#595959" font-weight="normal" text-anchor="start" textLength="46.0" lengthAdjust="spacingAndGlyphs" >Increase</text>
<rect x="1350" y="676" width="9" height="10" fill="#ed7d31"/>
<text x="1366.0" y="686.0" font-size="12.20" fill="#595959" font-weight="normal" text-anchor="start" textLength="49.0" lengthAdjust="spacingAndGlyphs" >Decrease</text>
<rect x="1427" y="676" width="9" height="10" fill="#a5a5a5"/>
<text x="1443.0" y="686.0" font-size="12.20" fill="#595959" font-weight="normal" text-anchor="start" textLength="26.0" lengthAdjust="spacingAndGlyphs" >Total</text>
<text x="897.0" y="749.5" font-size="16.90" fill="#595959" font-weight="bold" text-anchor="middle" textLength="238.0" lengthAdjust="spacingAndGlyphs" >Working Capital &amp; Current Ratio</text>
<rect x="278" y="946.4" width="1272.5" height="1.2" fill="#d9d9d9"/>
<text x="261.5" y="951.3" font-size="12.20" fill="#595959" font-weight="normal" text-anchor="end" >0</text>
<rect x="278" y="911.8" width="1272.5" height="1.2" fill="#d9d9d9"/>
<text x="261.5" y="916.7" font-size="12.20" fill="#595959" font-weight="normal" text-anchor="end" textLength="43.5" lengthAdjust="spacingAndGlyphs" >500,000</text>
<rect x="278" y="877.2" width="1272.5" height="1.2" fill="#d9d9d9"/>
<text x="261.5" y="882.1" font-size="12.20" fill="#595959" font-weight="normal" text-anchor="end" textLength="53.0" lengthAdjust="spacingAndGlyphs" >1,000,000</text>
<rect x="278" y="842.6" width="1272.5" height="1.2" fill="#d9d9d9"/>
<text x="261.5" y="847.5" font-size="12.20" fill="#595959" font-weight="normal" text-anchor="end" textLength="53.0" lengthAdjust="spacingAndGlyphs" >1,500,000</text>
<rect x="278" y="808.0" width="1272.5" height="1.2" fill="#d9d9d9"/>
<text x="261.5" y="812.9" font-size="12.20" fill="#595959" font-weight="normal" text-anchor="end" textLength="53.0" lengthAdjust="spacingAndGlyphs" >2,000,000</text>
<rect x="278" y="773.4" width="1272.5" height="1.2" fill="#d9d9d9"/>
<text x="261.5" y="778.3" font-size="12.20" fill="#595959" font-weight="normal" text-anchor="end" textLength="53.0" lengthAdjust="spacingAndGlyphs" >2,500,000</text>
<rect x="300.2" y="800.7" width="60.3" height="146.3" fill="#4472c4"/>
<text x="330.4" y="968.5" font-size="12.20" fill="#595959" font-weight="normal" text-anchor="middle" textLength="37.0" lengthAdjust="spacingAndGlyphs" >Jan-20</text>
<rect x="406.2" y="821.8" width="60.3" height="125.2" fill="#4472c4"/>
<text x="436.4" y="968.5" font-size="12.20" fill="#595959" font-weight="normal" text-anchor="middle" textLength="37.0" lengthAdjust="spacingAndGlyphs" >Feb-20</text>
<rect x="512.2" y="889.3" width="60.3" height="57.7" fill="#4472c4"/>
<text x="542.4" y="968.5" font-size="12.20" fill="#595959" font-weight="normal" text-anchor="middle" textLength="37.0" lengthAdjust="spacingAndGlyphs" >Mar-20</text>
<rect x="618.2" y="905.4" width="60.3" height="41.6" fill="#4472c4"/>
<text x="648.4" y="968.5" font-size="12.20" fill="#595959" font-weight="normal" text-anchor="middle" textLength="37.0" lengthAdjust="spacingAndGlyphs" >Apr-20</text>
<rect x="724.2" y="909.2" width="60.3" height="37.8" fill="#4472c4"/>
<text x="754.4" y="968.5" font-size="12.20" fill="#595959" font-weight="normal" text-anchor="middle" textLength="37.0" lengthAdjust="spacingAndGlyphs" >May-20</text>
<rect x="830.2" y="915.9" width="60.3" height="31.1" fill="#4472c4"/>
<text x="860.4" y="968.5" font-size="12.20" fill="#595959" font-weight="normal" text-anchor="middle" textLength="37.0" lengthAdjust="spacingAndGlyphs" >Jun-20</text>
<rect x="936.2" y="931.6" width="60.3" height="15.4" fill="#4472c4"/>
<text x="966.4" y="968.5" font-size="12.20" fill="#595959" font-weight="normal" text-anchor="middle" textLength="37.0" lengthAdjust="spacingAndGlyphs" >Jul-20</text>
<rect x="1042.2" y="934.8" width="60.3" height="12.2" fill="#4472c4"/>
<text x="1072.4" y="968.5" font-size="12.20" fill="#595959" font-weight="normal" text-anchor="middle" textLength="37.0" lengthAdjust="spacingAndGlyphs" >Aug-20</text>
<rect x="1148.2" y="922.8" width="60.3" height="24.2" fill="#4472c4"/>
<text x="1178.4" y="968.5" font-size="12.20" fill="#595959" font-weight="normal" text-anchor="middle" textLength="37.0" lengthAdjust="spacingAndGlyphs" >Sep-20</text>
<rect x="1254.2" y="921.3" width="60.3" height="25.7" fill="#4472c4"/>
<text x="1284.4" y="968.5" font-size="12.20" fill="#595959" font-weight="normal" text-anchor="middle" textLength="37.0" lengthAdjust="spacingAndGlyphs" >Oct-20</text>
<rect x="1360.2" y="921.3" width="60.3" height="25.7" fill="#4472c4"/>
<text x="1390.4" y="968.5" font-size="12.20" fill="#595959" font-weight="normal" text-anchor="middle" textLength="37.0" lengthAdjust="spacingAndGlyphs" >Nov-20</text>
<rect x="1466.2" y="925.4" width="60.3" height="21.6" fill="#4472c4"/>
<text x="1496.4" y="968.5" font-size="12.20" fill="#595959" font-weight="normal" text-anchor="middle" textLength="37.0" lengthAdjust="spacingAndGlyphs" >Dec-20</text>
<rect x="1550" y="773.5" width="1.2" height="174" fill="#bfbfbf"/>
<rect x="1550" y="946.5" width="5" height="1.1" fill="#bfbfbf"/>
<text x="1563.0" y="951.3" font-size="12.20" fill="#595959" font-weight="normal" text-anchor="start" textLength="19.0" lengthAdjust="spacingAndGlyphs" >0.0</text>
<rect x="1550" y="917.7" width="5" height="1.1" fill="#bfbfbf"/>
<text x="1563.0" y="922.5" font-size="12.20" fill="#595959" font-weight="normal" text-anchor="start" textLength="19.0" lengthAdjust="spacingAndGlyphs" >0.5</text>
<rect x="1550" y="888.8" width="5" height="1.1" fill="#bfbfbf"/>
<text x="1563.0" y="893.6" font-size="12.20" fill="#595959" font-weight="normal" text-anchor="start" textLength="19.0" lengthAdjust="spacingAndGlyphs" >1.0</text>
<rect x="1550" y="860.0" width="5" height="1.1" fill="#bfbfbf"/>
<text x="1563.0" y="864.8" font-size="12.20" fill="#595959" font-weight="normal" text-anchor="start" textLength="19.0" lengthAdjust="spacingAndGlyphs" >1.5</text>
<rect x="1550" y="831.2" width="5" height="1.1" fill="#bfbfbf"/>
<text x="1563.0" y="836.0" font-size="12.20" fill="#595959" font-weight="normal" text-anchor="start" textLength="19.0" lengthAdjust="spacingAndGlyphs" >2.0</text>
<rect x="1550" y="802.4" width="5" height="1.1" fill="#bfbfbf"/>
<text x="1563.0" y="807.1" font-size="12.20" fill="#595959" font-weight="normal" text-anchor="start" textLength="19.0" lengthAdjust="spacingAndGlyphs" >2.5</text>
<rect x="1550" y="773.5" width="5" height="1.1" fill="#bfbfbf"/>
<text x="1563.0" y="778.3" font-size="12.20" fill="#595959" font-weight="normal" text-anchor="start" textLength="19.0" lengthAdjust="spacingAndGlyphs" >3.0</text>
<path d="M330.3,808.0 C348.0,809.5 401.0,817.9 436.3,823.0 C471.6,828.1 507.0,854.8 542.3,859.3 C577.6,863.9 613.0,867.5 648.3,868.6 C683.6,869.6 719.0,869.1 754.3,869.7 C789.6,870.4 825.0,873.8 860.3,874.9 C895.6,876.0 931.0,879.8 966.3,880.7 C1001.6,881.5 1037.0,884.0 1072.3,883.6 C1107.6,883.2 1143.0,877.4 1178.3,876.6 C1213.6,875.8 1249.0,875.6 1284.3,875.5 C1319.6,875.4 1355.0,875.2 1390.3,875.5 C1425.6,875.8 1478.6,878.1 1496.3,878.4" fill="none" stroke="#ed7d31" stroke-width="2.6" stroke-linecap="round"/>
</g></svg>
<div class="abs" style="left:0;top:0;width:1825px;height:1017px;box-sizing:border-box;border:4px solid #b5b6ba;border-bottom-width:5px;border-radius:27px;box-shadow:0 0 0 60px #fff;z-index:50;pointer-events:none"></div>
</body></html>
